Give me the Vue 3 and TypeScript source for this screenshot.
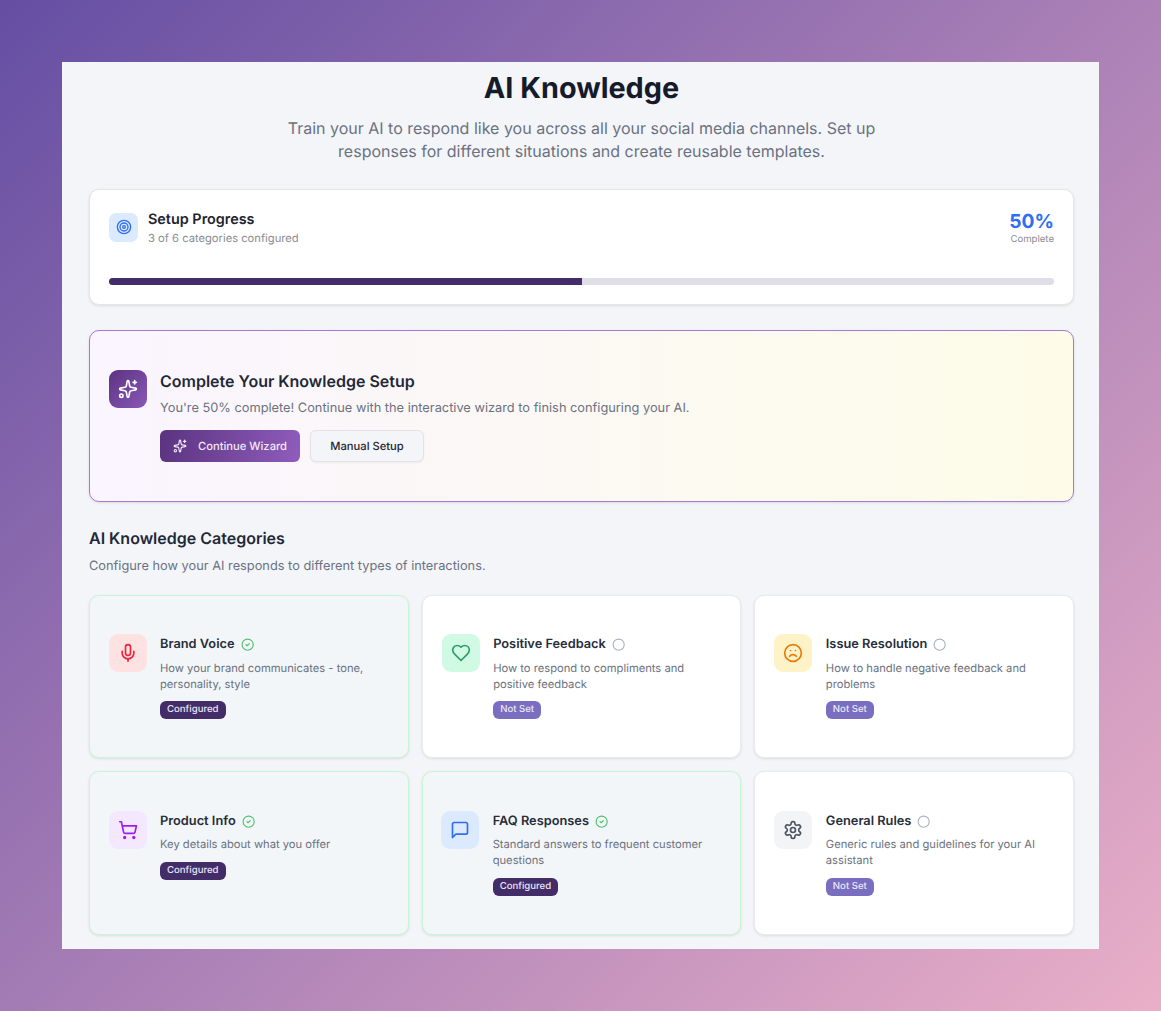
<script setup lang="ts">
interface Ic { p: string[]; c?: [number, number, number][] }
const icons: Record<string, Ic> = {
  target: { p: [], c: [[12, 12, 10], [12, 12, 6], [12, 12, 2]] },
  sparkles: {
    p: ['M11.017 2.814a1 1 0 0 1 1.966 0l1.051 5.558a2 2 0 0 0 1.594 1.594l5.558 1.051a1 1 0 0 1 0 1.966l-5.558 1.051a2 2 0 0 0-1.594 1.594l-1.051 5.558a1 1 0 0 1-1.966 0l-1.051-5.558a2 2 0 0 0-1.594-1.594l-5.558-1.051a1 1 0 0 1 0-1.966l5.558-1.051a2 2 0 0 0 1.594-1.594z', 'M20 2v4', 'M22 4h-4'],
    c: [[4, 20, 2]],
  },
  mic: { p: ['M12 2a3 3 0 0 0-3 3v7a3 3 0 0 0 6 0V5a3 3 0 0 0-3-3Z', 'M19 10v2a7 7 0 0 1-14 0v-2', 'M12 19v3'] },
  heart: { p: ['M19 14c1.49-1.46 3-3.21 3-5.5A5.5 5.5 0 0 0 16.5 3c-1.76 0-3 .5-4.5 2-1.5-1.5-2.74-2-4.5-2A5.5 5.5 0 0 0 2 8.5c0 2.3 1.5 4.05 3 5.5l7 7Z'] },
  frown: { p: ['M16 16s-1.5-2-4-2-4 2-4 2', 'M9 9h.01', 'M15 9h.01'], c: [[12, 12, 10]] },
  cart: { p: ['M2.05 2.05h2l2.66 12.42a2 2 0 0 0 2 1.58h9.78a2 2 0 0 0 1.95-1.57l1.65-7.43H5.12'], c: [[8, 21, 1], [19, 21, 1]] },
  message: { p: ['M21 15a2 2 0 0 1-2 2H7l-4 4V5a2 2 0 0 1 2-2h14a2 2 0 0 1 2 2z'] },
  settings: {
    p: ['M12.22 2h-.44a2 2 0 0 0-2 2v.18a2 2 0 0 1-1 1.73l-.43.25a2 2 0 0 1-2 0l-.15-.08a2 2 0 0 0-2.73.73l-.22.38a2 2 0 0 0 .73 2.73l.15.1a2 2 0 0 1 1 1.72v.51a2 2 0 0 1-1 1.74l-.15.09a2 2 0 0 0-.73 2.73l.22.38a2 2 0 0 0 2.73.73l.15-.08a2 2 0 0 1 2 0l.43.25a2 2 0 0 1 1 1.73V20a2 2 0 0 0 2 2h.44a2 2 0 0 0 2-2v-.18a2 2 0 0 1 1-1.73l.43-.25a2 2 0 0 1 2 0l.15.08a2 2 0 0 0 2.73-.73l.22-.39a2 2 0 0 0-.73-2.73l-.15-.08a2 2 0 0 1-1-1.74v-.5a2 2 0 0 1 1-1.74l.15-.09a2 2 0 0 0 .73-2.73l-.22-.38a2 2 0 0 0-2.73-.73l-.15.08a2 2 0 0 1-2 0l-.43-.25a2 2 0 0 1-1-1.73V4a2 2 0 0 0-2-2z'],
    c: [[12, 12, 3]],
  },
  check: { p: ['m9 12 2 2 4-4'], c: [[12, 12, 10]] },
  circle: { p: [], c: [[12, 12, 10]] },
}
const cats = [
  { t: 'Brand Voice', d: 'How your brand communicates - tone, personality, style', i: 'mic', bg: '#fee2e2', fg: '#ef233c', ok: true },
  { t: 'Positive Feedback', d: 'How to respond to compliments and positive feedback', i: 'heart', bg: '#d1fae5', fg: '#2f9e66', ok: false },
  { t: 'Issue Resolution', d: 'How to handle negative feedback and problems', i: 'frown', bg: '#fef3c7', fg: '#e97b0c', ok: false },
  { t: 'Product Info', d: 'Key details about what you offer', i: 'cart', bg: '#f3e8ff', fg: '#a21cf0', ok: true },
  { t: 'FAQ Responses', d: 'Standard answers to frequent customer questions', i: 'message', bg: '#dbeafe', fg: '#2f6df6', ok: true },
  { t: 'General Rules', d: 'Generic rules and guidelines for your AI assistant', i: 'settings', bg: '#f3f4f6', fg: '#4b5563', ok: false },
]
</script>

<template>
  <div class="page">
    <main class="panel">
      <header class="head">
        <h1>AI Knowledge</h1>
        <p>Train your AI to respond like you across all your social media channels. Set up responses for different situations and create reusable templates.</p>
      </header>

      <section class="progress">
        <div class="progress-top">
          <div class="progress-left">
            <span class="pi">
              <svg class="ic s16" viewBox="0 0 24 24">
                <circle v-for="(c, n) in icons.target.c" :key="n" :cx="c[0]" :cy="c[1]" :r="c[2]" />
              </svg>
            </span>
            <div>
              <div class="pt">Setup Progress</div>
              <div class="ps">3 of 6 categories configured</div>
            </div>
          </div>
          <div class="pr">
            <div class="pct">50%</div>
            <div class="pc">Complete</div>
          </div>
        </div>
        <div class="track"><div class="fill" :style="{ width: '50%' }"></div></div>
      </section>

      <section class="banner">
        <span class="bi">
          <svg class="ic s20" viewBox="0 0 24 24">
            <path v-for="d in icons.sparkles.p" :key="d" :d="d" />
            <circle v-for="(c, n) in icons.sparkles.c" :key="n" :cx="c[0]" :cy="c[1]" :r="c[2]" />
          </svg>
        </span>
        <div>
          <h2>Complete Your Knowledge Setup</h2>
          <p>You're 50% complete! Continue with the interactive wizard to finish configuring your AI.</p>
          <div class="btns">
            <button class="primary">
              <svg class="ic s14" viewBox="0 0 24 24">
                <path v-for="d in icons.sparkles.p" :key="d" :d="d" />
                <circle v-for="(c, n) in icons.sparkles.c" :key="n" :cx="c[0]" :cy="c[1]" :r="c[2]" />
              </svg>
              Continue Wizard
            </button>
            <button class="secondary">Manual Setup</button>
          </div>
        </div>
      </section>

      <h3 class="sec">AI Knowledge Categories</h3>
      <p class="sub">Configure how your AI responds to different types of interactions.</p>

      <div class="grid">
        <article v-for="c in cats" :key="c.t" class="card" :class="{ ok: c.ok }">
          <div class="card-row">
            <span class="ci" :style="{ background: c.bg, color: c.fg }">
              <svg class="ic s20" viewBox="0 0 24 24">
                <path v-for="d in icons[c.i].p" :key="d" :d="d" />
                <circle v-for="(k, n) in icons[c.i].c" :key="n" :cx="k[0]" :cy="k[1]" :r="k[2]" />
              </svg>
            </span>
            <div class="cb">
              <div class="ct">
                <span>{{ c.t }}</span>
                <svg class="ic s13" :class="c.ok ? 'st-ok' : 'st-no'" viewBox="0 0 24 24">
                  <path v-for="d in icons[c.ok ? 'check' : 'circle'].p" :key="d" :d="d" />
                  <circle cx="12" cy="12" r="10" />
                </svg>
              </div>
              <p>{{ c.d }}</p>
              <span class="badge" :class="c.ok ? 'b-ok' : 'b-no'">{{ c.ok ? 'Configured' : 'Not Set' }}</span>
            </div>
          </div>
        </article>
      </div>
    </main>
  </div>
</template>

<style>
html, body { margin: 0; padding: 0; }
</style>

<style scoped>
.page {
  width: 1161px;
  height: 1011px;
  padding: 62px;
  box-sizing: border-box;
  background: linear-gradient(135deg, #654ea3 0%, #eaafc8 100%);
  font-family: Inter, "Liberation Sans", sans-serif;
  text-rendering: geometricPrecision;
  overflow: hidden;
}
.panel {
  width: 1037px;
  height: 887px;
  box-sizing: border-box;
  background: #f3f5f9;
  padding: 0 25px 0 27px;
  overflow: hidden;
}
.head { text-align: center; }
h1 {
  margin: 0;
  padding-top: 6px;
  font-size: 28.8px;
  line-height: 40px;
  font-weight: 700;
  color: #151b2b;
}
.head p {
  margin: 8.5px auto 0;
  width: 620px;
  font-size: 16px;
  line-height: 23.4px;
  color: #6b7280;
}
.ic {
  fill: none;
  stroke: currentColor;
  stroke-width: 2;
  stroke-linecap: round;
  stroke-linejoin: round;
  flex: none;
  display: block;
}
.s13 { width: 13.3px; height: 13.3px; }
.s14 { width: 14px; height: 14px; }
.s16 { width: 16px; height: 16px; }
.s20 { width: 20px; height: 20px; }

.progress {
  margin-top: 25.2px;
  height: 116px;
  box-sizing: border-box;
  background: #fff;
  border: 1px solid #e8e4e2;
  border-radius: 10px;
  box-shadow: 0 1px 3px rgba(0, 0, 0, .1);
  padding: 20px 19px;
}
.progress-top { display: flex; justify-content: space-between; height: 68.5px; }
.progress-left { display: flex; gap: 10px; align-items: flex-start; }
.pi {
  width: 29px;
  height: 29px;
  margin-top: 3px;
  border-radius: 7px;
  background: #dbeafe;
  color: #2f6df6;
  display: flex;
  align-items: center;
  justify-content: center;
}
.pt { font-size: 14.4px; line-height: 20px; font-weight: 600; color: #1f2430; }
.ps { font-size: 11.2px; line-height: 16px; margin-top: 0; color: #8b8d94; }
.pr { text-align: right; }
.pct { font-size: 19.2px; line-height: 22px; font-weight: 700; color: #2f6df6; }
.pc { font-size: 9.6px; line-height: 12px; margin-top: 2.6px; color: #8b8d94; }
.track { height: 7px; border-radius: 4px; background: #dfdde8; overflow: hidden; }
.fill { height: 100%; background: #432d68; }

.banner {
  margin-top: 25.5px;
  height: 171.7px;
  box-sizing: border-box;
  display: flex;
  align-items: center;
  gap: 13px;
  padding: 0 19px;
  border: 1px solid #a777d6;
  border-radius: 10px;
  background: linear-gradient(90deg, #faf5ff, #fefce8);
  box-shadow: 0 1px 3px rgba(0, 0, 0, .1);
}
.bi {
  width: 38px;
  height: 38px;
  align-self: flex-start;
  margin-top: 39px;
  border-radius: 9px;
  background: linear-gradient(135deg, #5b3380, #8a58b8);
  color: #fff;
  display: flex;
  align-items: center;
  justify-content: center;
}
h2 { margin: 0; font-size: 16px; line-height: 22.5px; font-weight: 600; color: #1f2937; }
.banner p { margin: 6.5px 0 0; font-size: 12.8px; line-height: 20px; color: #6b7280; }
.btns { display: flex; gap: 10px; margin-top: 11.7px; }
button {
  height: 31.5px;
  box-sizing: border-box;
  border-radius: 6px;
  font-family: inherit;
  font-size: 11.2px;
  font-weight: 500;
  display: flex;
  align-items: center;
  white-space: nowrap;
  text-rendering: geometricPrecision;
}
.primary {
  width: 140px;
  gap: 11px;
  padding: 0 0 0 13px;
  border: 0;
  color: #f1e8f8;
  background: linear-gradient(100deg, #5b3380, #8f5cbc);
}
.secondary {
  width: 114px;
  justify-content: center;
  border: 1px solid #e4e2e4;
  background: #f3f5f9;
  color: #1f2430;
  box-shadow: 0 1px 2px rgba(0, 0, 0, .05);
}

.sec { margin: 25.3px 0 0; font-size: 16px; line-height: 22px; font-weight: 600; color: #1f2937; }
.sub { margin: 8px 0 0; font-size: 12.8px; line-height: 20px; color: #6b7280; }

.grid {
  margin-top: 18.3px;
  display: grid;
  grid-template-columns: repeat(3, 1fr);
  grid-template-rows: 162.5px 164px;
  gap: 13.5px 13px;
}
.card {
  box-sizing: border-box;
  background: #fff;
  border: 1px solid #eaebef;
  border-radius: 10px;
  box-shadow: 0 1px 3px rgba(0, 0, 0, .1);
  padding: 0 19px;
  display: flex;
  align-items: center;
}
.card.ok { background: #f2f6f8; border: 1.5px solid #c9f5d7; padding: 0 18.5px; }
.card-row { display: flex; gap: 13.5px; align-items: flex-start; height: 85px; }
.ci {
  width: 38px;
  height: 38px;
  border-radius: 9px;
  display: flex;
  align-items: center;
  justify-content: center;
  flex: none;
}
.ct { display: flex; align-items: center; gap: 6px; padding-top: 1px; font-size: 12.8px; line-height: 20px; font-weight: 600; color: #282d3a; }
.st-ok { color: #4cc06c; }
.st-no { color: #a9afc4; }
.cb p { margin: 4.6px 0 9.6px; font-size: 11.2px; line-height: 16px; color: #6b7280; }
.badge {
  display: inline-block;
  height: 18px;
  line-height: 17px;
  padding: 0 7px;
  border-radius: 6px;
  font-size: 9.6px;
  font-weight: 500;
  color: #ece6f5;
  vertical-align: top;
}
.b-ok { background: #432d68; }
.b-no { background: #7a6ec0; }
</style>
